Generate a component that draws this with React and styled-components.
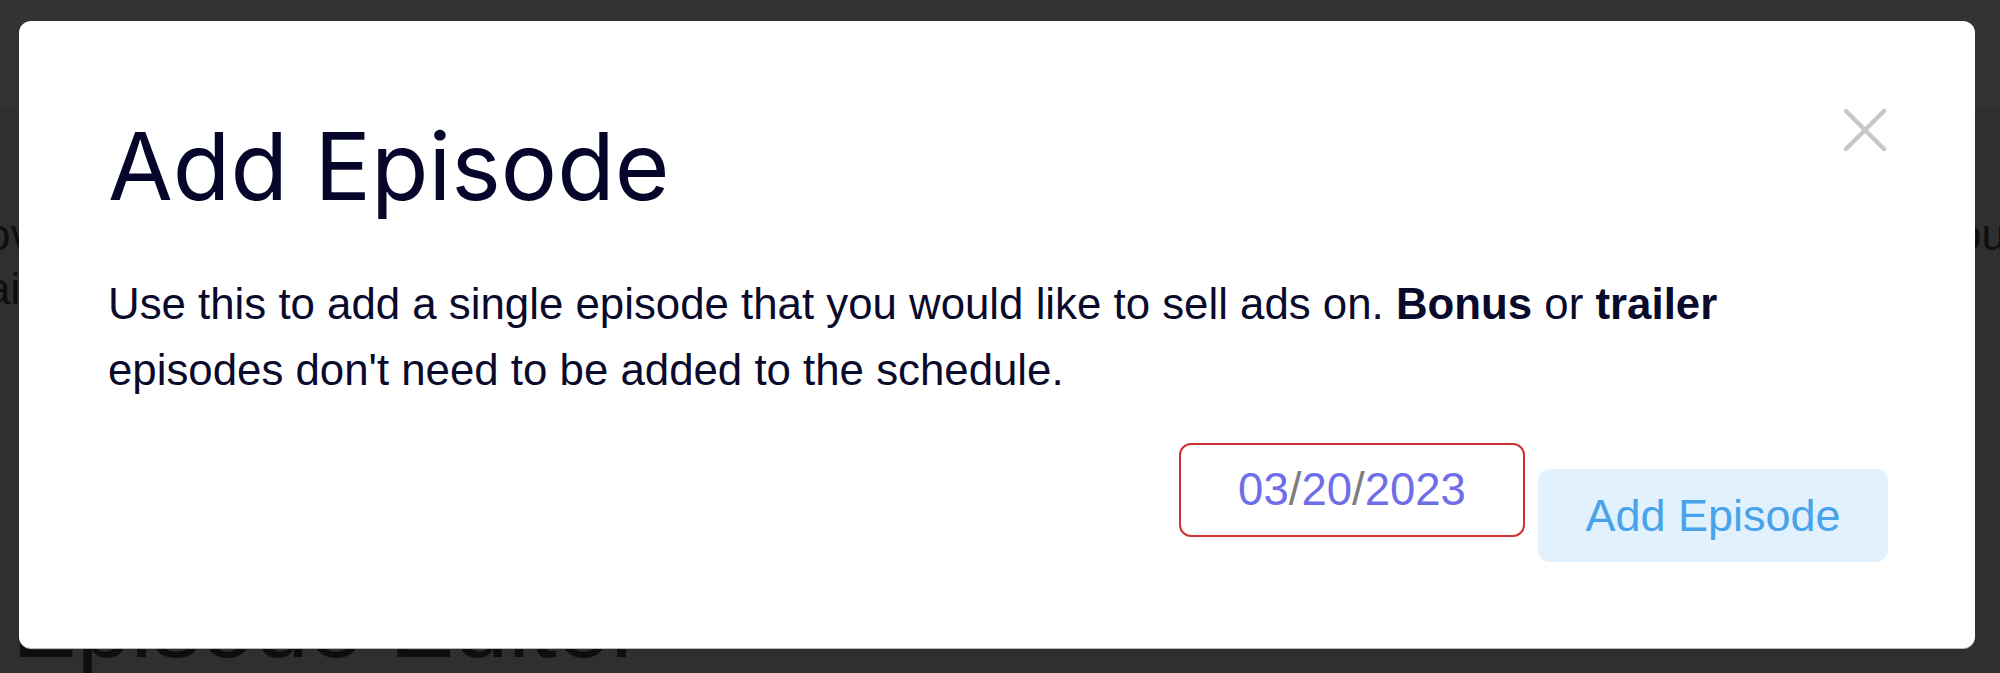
import React from 'react';
import styled, { createGlobalStyle } from 'styled-components';

const GlobalStyle = createGlobalStyle`
  html, body {
    margin: 0;
    padding: 0;
    height: 673px;
    overflow: hidden;
    background: #2f2f2f;
  }
  * {
    box-sizing: border-box;
  }
`;

function AddEpisodeModal() {
  return (
    <Page>
      <GlobalStyle />
      <TopBar />
      <Backdrop>
        <BackLine>
          <span>ov</span>
          <span>ou</span>
        </BackLine>
        <BackLine>
          <span>ai</span>
        </BackLine>
        <PageTitle>Episode Editor</PageTitle>
      </Backdrop>

      <Modal role="dialog">
        <Header>
          <Title>Add Episode</Title>
          <CloseButton aria-label="Close">
            <svg width="44" height="44" viewBox="0 0 44 44">
              <path d="M3 3L41 41M41 3L3 41" stroke="#c8c8c8" strokeWidth="4.5" strokeLinecap="round" />
            </svg>
          </CloseButton>
        </Header>
        <Description>
          Use this to add a single episode that you would like to sell ads on. <b>Bonus</b> or{' '}
          <b>trailer</b> episodes don't need to be added to the schedule.
        </Description>
        <Actions>
          <DateField>
            <Digits>03</Digits>
            <Slash>/</Slash>
            <Digits>20</Digits>
            <Slash>/</Slash>
            <Digits>2023</Digits>
          </DateField>
          <AddButton>Add Episode</AddButton>
        </Actions>
      </Modal>
    </Page>
  );
}

const Page = styled.div`
  position: relative;
  width: 2000px;
  height: 673px;
  overflow: hidden;
  font-family: 'Liberation Sans', Arial, sans-serif;
`;

const TopBar = styled.div`
  height: 108px;
  background: #333333;
`;

const Backdrop = styled.div`
  display: flex;
  flex-direction: column;
  padding-top: 100px;
  color: #0e0e0e;
`;

const BackLine = styled.div`
  display: flex;
  justify-content: space-between;
  margin: 0 -6px 0 -14px;
  font-size: 44px;
  line-height: 54px;
`;

const PageTitle = styled.h1`
  margin: 259px 0 0 12px;
  font-size: 97px;
  font-weight: 400;
  line-height: 97px;
  white-space: nowrap;
`;

const Modal = styled.div`
  position: absolute;
  left: 19px;
  top: 21px;
  width: 1956px;
  height: 627px;
  padding: 87px 87px 0 89px;
  background: #ffffff;
  border-radius: 12px;
  box-shadow: 0 1px 0 #b9b9b9;
  color: #0a0a2c;
`;

const Header = styled.div`
  display: flex;
  justify-content: space-between;
  align-items: flex-start;
`;

const Title = styled.h2`
  margin: 11px 0 0;
  font-family: Inter, 'Liberation Sans', sans-serif;
  font-size: 94px;
  font-weight: 400;
  line-height: 94px;
  color: #06062a;
`;

const CloseButton = styled.button`
  display: flex;
  padding: 0;
  margin-right: 1px;
  border: none;
  background: none;
  cursor: pointer;
`;

const Description = styled.p`
  max-width: 1700px;
  margin: 58px 0 0;
  font-size: 43.8px;
  line-height: 66px;
  b {
    font-weight: 700;
  }
`;

const Actions = styled.div`
  display: flex;
  justify-content: flex-end;
  align-items: flex-start;
  gap: 13px;
  margin-top: 40px;
`;

const DateField = styled.div`
  display: flex;
  align-items: center;
  justify-content: center;
  width: 346px;
  height: 94px;
  border: 2px solid #cf3434;
  border-radius: 12px;
  font-size: 45.5px;
`;

const Digits = styled.span`
  color: #6e6ee8;
`;

const Slash = styled.span`
  color: #7d7d7d;
`;

const AddButton = styled.button`
  width: 350px;
  height: 93px;
  margin-top: 26px;
  border: none;
  border-radius: 12px;
  background: #e1f1fd;
  color: #48a3ea;
  font-family: 'Liberation Sans', Arial, sans-serif;
  font-size: 45px;
  cursor: pointer;
`;

export default AddEpisodeModal;
